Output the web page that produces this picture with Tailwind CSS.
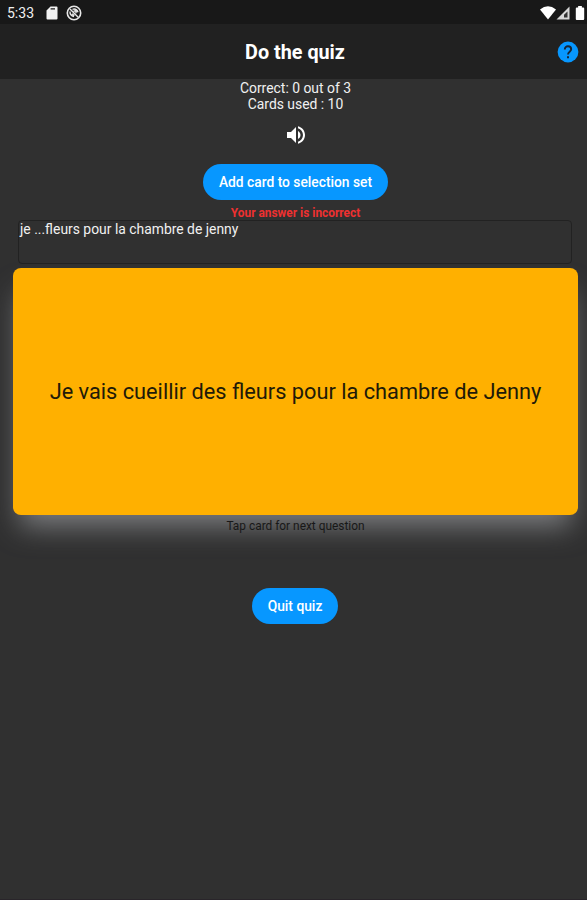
<!DOCTYPE html>
<html lang="en">
<head>
    <meta charset="UTF-8">
    <meta name="viewport" content="width=device-width, initial-scale=1.0">
    <title>Do the quiz</title>
    <!-- Tailwind CSS for styling -->
    <script src="https://cdn.jsdelivr.net/npm/@tailwindcss/browser@4"></script>
</head>
<body class="bg-[#303030] text-[#f0f0f0] font-[Roboto,sans-serif] h-screen overflow-hidden flex flex-col border-b border-[#29252a]">

    <!-- Status bar -->
    <div class="h-6 shrink-0 bg-[#181818] flex items-center pl-[7px] pr-[2px] pt-[2px]">
        <span class="text-[14px] leading-4 w-[39px]">5:33</span>
        <svg class="w-[12px] h-[14px]" viewBox="0 0 12 14" fill="#f2f2f2">
            <path fill-rule="evenodd" d="M4.5 0.5H10.5Q11.5 0.5 11.5 1.5V12.5Q11.5 13.5 10.5 13.5H1.5Q.5 13.5 .5 12.5V4.5ZM4.6 2.2V3.4H9V2.2Z"></path>
        </svg>
        <svg class="w-4 h-4 ml-2" viewBox="0 0 16 16" fill="none" stroke="#e8e8e8">
            <circle cx="8" cy="8" r="6.7" stroke-width="1.6"></circle>
            <path d="M4 4L12.2 12.2M4 6.5Q3.8 10.5 8 11.7M6.5 4.3Q10.5 3.2 12 7.2M6.2 8.7L8.3 10.8M7.6 6H10V8.2" stroke-width="1.4"></path>
        </svg>
        <!-- Wifi, signal and battery -->
        <div class="ml-auto flex items-center">
            <svg class="w-4 h-[14px]" viewBox="0 0 16 14" fill="#fff">
                <path d="M0 3.5Q8-3 16 3.5L8 13.5Z"></path>
            </svg>
            <svg class="w-[14px] h-[14px]" viewBox="0 0 14 14">
                <path d="M13.5 .5V13.5H.5Z" fill="#d8d8d8"></path>
                <path d="M11.5 5.5V11.5H8V8.8Z" fill="#333"></path>
            </svg>
            <svg class="w-[10px] h-[14px] ml-[5px]" viewBox="0 0 10 15" fill="#fff">
                <path d="M3 0H7V1.7H8.5Q9.5 1.7 9.5 2.7V14Q9.5 15 8.5 15H1.5Q.5 15 .5 14V2.7Q.5 1.7 1.5 1.7H3Z"></path>
            </svg>
        </div>
    </div>

    <!-- App bar -->
    <header class="h-[55px] shrink-0 bg-[#212121] grid grid-cols-[1fr_auto_1fr] items-center pl-[11px] pr-[8px]">
        <h1 class="col-start-2 text-[19.8px] leading-6 font-bold text-white pt-[2px]">Do the quiz</h1>
        <button class="justify-self-end" aria-label="Help">
            <svg class="w-[22px] h-[22px]" viewBox="0 0 22 22">
                <circle cx="11" cy="11" r="10.4" fill="#0797ff"></circle>
                <path d="M7.8 8.5C7.8 6.4 9.1 5.2 11 5.2S14.2 6.5 14.2 8.3C14.2 10.7 11 10.8 11 13.4" fill="none" stroke="#172535" stroke-width="1.9"></path>
                <path d="M10 15.2H12V17.2H10Z" fill="#172535"></path>
            </svg>
        </button>
    </header>

    <!-- Quiz content -->
    <main class="flex flex-col items-center pl-[13px] pr-[9px]">
        <div class="text-center text-[13.9px] leading-4 pt-px">
            <p>Correct: 0 out of 3</p>
            <p>Cards used : 10</p>
        </div>

        <button class="mt-[11px]" aria-label="Play sound">
            <svg class="w-6 h-6" viewBox="0 0 24 24" fill="#fff">
                <path d="M3 9v6h4l5 5V4L7 9H3zm13.5 3c0-1.77-1.02-3.29-2.5-4.03v8.05c1.48-.73 2.5-2.25 2.5-4.02zM14 3.23v2.06c2.89.86 5 3.54 5 6.71s-2.11 5.85-5 6.71v2.06c4.01-.91 7-4.49 7-8.77s-2.99-7.86-7-8.77z"></path>
            </svg>
        </button>

        <button class="mt-[17px] h-9 w-[185px] rounded-full bg-[#0797ff] text-white text-[13.8px] leading-4 font-medium whitespace-nowrap">Add card to selection set</button>

        <p class="mt-[6px] text-[11.9px] leading-[14px] font-bold text-[#ee3030]">Your answer is incorrect</p>

        <!-- Typed answer -->
        <div class="w-[554px] h-[44px] mr-px rounded-[4px] border border-[#222] text-[13.9px] leading-4 pl-px">je ...fleurs pour la chambre de jenny</div>

        <!-- Answer card -->
        <div class="mt-1 w-full h-[247px] rounded-[8px] bg-[#ffb000] text-[#211a08] shadow-[0_18px_28px_-7px_#7d7e80] flex items-center justify-center">
            <p class="text-[21.75px] leading-7 whitespace-nowrap">Je vais cueillir des fleurs pour la chambre de Jenny</p>
        </div>
        <p class="mt-1 text-[11.9px] leading-[14px] text-[#181818] relative">Tap card for next question</p>

        <button class="mt-[55px] mr-px h-9 w-[86px] rounded-full bg-[#0797ff] text-white text-[13.8px] leading-4 font-medium">Quit quiz</button>
    </main>
</body>
</html>
